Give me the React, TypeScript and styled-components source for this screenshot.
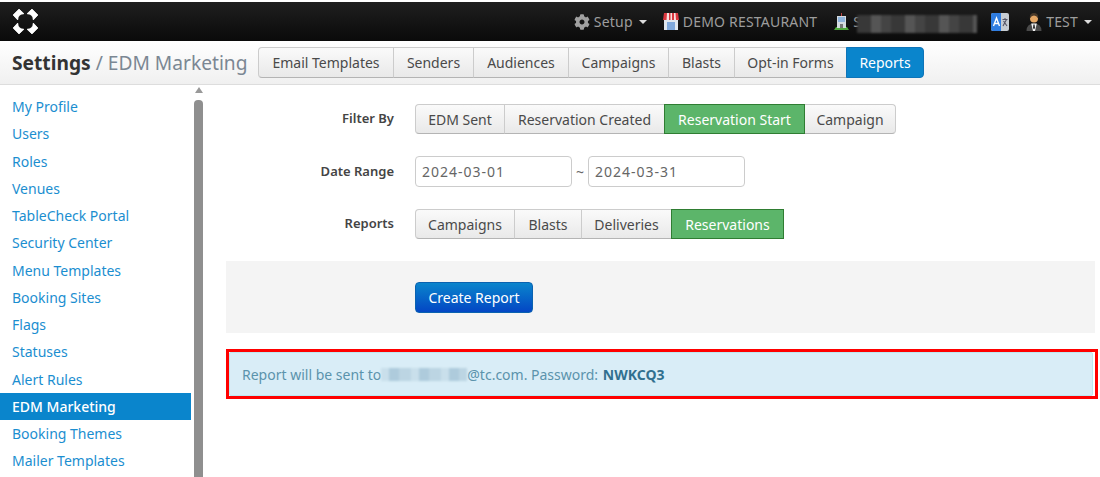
import React from "react";
import styled, { createGlobalStyle } from "styled-components";
import { FaCog } from "react-icons/fa";

const GlobalStyle = createGlobalStyle`
  html, body {
    margin: 0;
    padding: 0;
    background: #fff;
    overflow: hidden;
  }
  * {
    box-sizing: border-box;
  }
  body {
    font-family: "Noto Sans", "Open Sans", sans-serif;
    font-size: 14px;
    color: #333;
  }
`;

const Page = styled.div`
  width: 1100px;
  height: 477px;
  padding-top: 2px;
  display: flex;
  flex-direction: column;
  overflow: hidden;
`;

const TopBar = styled.div`
  height: 39px;
  flex: none;
  background: linear-gradient(#1f1f1f, #0a0a0a);
  display: flex;
  align-items: center;
  justify-content: space-between;
  padding: 0 8px 0 12px;
`;

const TopNav = styled.div`
  display: flex;
  align-items: center;
`;

const TopItem = styled.span<{ $left: number }>`
  display: flex;
  align-items: center;
  gap: 4px;
  margin-left: ${(p) => p.$left}px;
  color: #9d9d9d;
  font-size: 14px;
  letter-spacing: 0.2px;
  white-space: nowrap;
`;

const Caret = styled.span`
  width: 0;
  height: 0;
  margin-left: 2px;
  border-left: 4px solid transparent;
  border-right: 4px solid transparent;
  border-top: 4px solid #ddd;
`;

const Blurred = styled.span`
  display: flex;
  width: 120px;
  height: 18px;
  margin: 5px 0 0 -8px;
  background: repeating-linear-gradient(90deg, #383838 0 14px, #555 14px 24px, #444 24px 34px);
  filter: blur(1px);
`;

const SubHeader = styled.div`
  height: 44px;
  flex: none;
  background: linear-gradient(#fff, #f0f0f0);
  border-bottom: 1px solid #ddd;
  display: flex;
  align-items: center;
  padding: 0 0 0 12px;
`;

const Title = styled.div`
  font-size: 19.2px;
  color: #7b8793;
  white-space: nowrap;
  width: 246px;
  flex: none;
  strong {
    color: #333;
    font-weight: 700;
  }
`;

const BtnGroup = styled.div`
  display: flex;
`;

const SegBtn = styled.div<{ $width: number; $height?: number; $active?: "blue" | "green" }>`
  width: ${(p) => p.$width}px;
  height: ${(p) => p.$height ?? 31}px;
  display: flex;
  align-items: center;
  justify-content: center;
  font-size: 14px;
  white-space: nowrap;
  margin-left: -1px;
  position: relative;
  z-index: ${(p) => (p.$active ? 1 : 0)};
  color: ${(p) => (p.$active ? "#fff" : "#4a4a4a")};
  border: 1px solid ${(p) => (p.$active === "blue" ? "#0e74b8" : p.$active === "green" ? "#2f7d32" : "#ccc")};
  border-bottom-color: ${(p) => (p.$active === "blue" ? "#0e74b8" : p.$active === "green" ? "#2f7d32" : "#b4b4b4")};
  background: ${(p) =>
    p.$active === "blue"
      ? "#0a85cc"
      : p.$active === "green"
        ? "#5cb56a"
        : "linear-gradient(#fafafa, #e9e9e9)"};
  &:first-child {
    margin-left: 0;
    border-radius: 4px 0 0 4px;
  }
  &:last-child {
    border-radius: ${(p) => (p.$active === "green" ? "0" : "0 4px 4px 0")};
  }
`;

const Body = styled.div`
  flex: 1;
  display: flex;
  min-height: 0;
`;

const Sidebar = styled.nav`
  width: 191px;
  flex: none;
  padding-top: 8px;
`;

const SideLink = styled.div<{ $active?: boolean }>`
  height: 27.25px;
  display: flex;
  align-items: center;
  padding-left: 12px;
  font-size: 14px;
  white-space: nowrap;
  color: ${(p) => (p.$active ? "#fff" : "#1b8ed0")};
  background: ${(p) => (p.$active ? "#0a85cc" : "transparent")};
  font-weight: ${(p) => (p.$active ? 500 : 400)};
`;

const Scrollbar = styled.div`
  width: 9px;
  flex: none;
  margin: 2px 0 0 3px;
  display: flex;
  flex-direction: column;
  align-items: center;
`;

const ScrollArrow = styled.div`
  width: 0;
  height: 0;
  border-left: 4.5px solid transparent;
  border-right: 4.5px solid transparent;
  border-bottom: 6px solid #999;
`;

const ScrollThumb = styled.div`
  width: 9px;
  flex: 1;
  margin-top: 7px;
  border-radius: 4px 4px 0 0;
  background: #8f8f8f;
`;

const Main = styled.main`
  width: 872px;
  flex: none;
  margin-left: 23px;
  padding-top: 19px;
`;

const FormRow = styled.div<{ $gap: number }>`
  display: flex;
  align-items: center;
  margin-bottom: ${(p) => p.$gap}px;
`;

const FormLabel = styled.div`
  width: 189px;
  padding: 0 21px 2px 0;
  text-align: right;
  font-weight: 600;
  font-size: 13px;
  color: #444;
  flex: none;
`;

const DateInput = styled.div`
  width: 157px;
  height: 31px;
  border: 1px solid #ccc;
  border-radius: 4px;
  padding-left: 6px;
  display: flex;
  align-items: center;
  font-size: 14px;
  color: #666;
  letter-spacing: 1px;
`;

const Tilde = styled.span`
  width: 16px;
  text-align: center;
  color: #666;
`;

const ActionBar = styled.div`
  height: 72px;
  margin: 22px 3px 0 0;
  background: #f4f4f4;
  padding-left: 189px;
  display: flex;
  align-items: center;
`;

const PrimaryButton = styled.button`
  width: 118px;
  height: 31px;
  padding: 0;
  border: 1px solid #0a62b0;
  border-radius: 4px;
  background: linear-gradient(#0a85cc, #0346c4);
  color: #fff;
  font-family: inherit;
  font-size: 14px;
`;

const NoticeFrame = styled.div`
  margin-top: 16px;
  height: 50px;
  width: 872px;
  padding-right: 2px;
  border: 3px solid #f00;
`;

const Notice = styled.div`
  height: 100%;
  padding-left: 12px;
  display: flex;
  align-items: center;
  background: #d9edf7;
  border: 1px solid #bce8f1;
  border-radius: 2px;
  color: #5b93ac;
  font-size: 14px;
  white-space: pre;
  strong {
    color: #31708f;
    font-weight: 700;
    margin-left: 1px;
  }
`;

const MailBlur = styled.span`
  width: 86px;
  height: 13px;
  background: repeating-linear-gradient(90deg, #c9dfeb 0 8px, #aecbdc 8px 18px, #bcd5e3 18px 30px);
  filter: blur(1px);
`;

const sideLinks = [
  "My Profile", "Users", "Roles", "Venues", "TableCheck Portal", "Security Center",
  "Menu Templates", "Booking Sites", "Flags", "Statuses", "Alert Rules", "EDM Marketing",
  "Booking Themes", "Mailer Templates",
];

const tabs: [string, number][] = [
  ["Email Templates", 136], ["Senders", 81], ["Audiences", 96], ["Campaigns", 101],
  ["Blasts", 67], ["Opt-in Forms", 113], ["Reports", 78],
];

const filters: [string, number][] = [
  ["EDM Sent", 90], ["Reservation Created", 161], ["Reservation Start", 141], ["Campaign", 92],
];

const reports: [string, number][] = [
  ["Campaigns", 100], ["Blasts", 68], ["Deliveries", 91], ["Reservations", 113],
];

const Logo = () => (
  <svg width="27" height="27" viewBox="-13.5 -13.5 27 27">
    {[0, 90, 180, 270].map((angle) => (
      <path
        key={angle}
        d="M-6.5 -12.4 L-12.4 -6.5 L-7.8 -1.6 Q-7.6 -7.6 -1.6 -7.8 Z"
        fill="#fff"
        stroke="#fff"
        strokeWidth="0.8"
        strokeLinejoin="round"
        transform={`rotate(${angle})`}
      />
    ))}
  </svg>
);

const StoreIcon = () => (
  <svg width="16" height="17" viewBox="0 0 16 17">
    <rect x="1" y="6" width="14" height="11" fill="#dfe6ee" />
    <rect x="4" y="9" width="8" height="8" fill="#7fa8dc" />
    <path d="M1 0h14l1 7H0z" fill="#d9363e" />
    <path d="M4 0h2v7H3.5zM7.5 0h1.5v7H7.5zM11 0h1.5l.5 7h-2z" fill="#f6dede" />
  </svg>
);

const BuildingIcon = () => (
  <svg width="15" height="18" viewBox="0 0 15 18">
    <path d="M0 17 L2 14 H13 L15 17z" fill="#4fa83d" />
    <rect x="3" y="3" width="9" height="12" fill="#d4dbe0" />
    <rect x="4" y="4" width="7" height="5" fill="#8fb4dc" />
    <rect x="6" y="11" width="3" height="4" fill="#777" />
    <rect x="7" y="0" width="1" height="3" fill="#b44" />
  </svg>
);

const TranslateIcon = () => (
  <svg width="18" height="18" viewBox="0 0 18 18">
    <rect x="0" y="0" width="18" height="18" rx="2" fill="#c6ccd2" />
    <path d="M0 2a2 2 0 0 1 2-2h8v18H2a2 2 0 0 1-2-2z" fill="#2f7de1" />
    <path d="M2.5 13 L5.5 5 L8.5 13 M3.6 10.5h3.8" stroke="#fff" strokeWidth="1.4" fill="none" />
    <path d="M11.5 6.5h5M14 5v1.5M12 13l3.5-6.5M12.5 8l3.5 5" stroke="#556" strokeWidth="1.1" fill="none" />
  </svg>
);

const UserIcon = () => (
  <svg width="16" height="19" viewBox="0 0 16 19">
    <path d="M0.5 19 Q0.5 11.5 8 11.5 Q15.5 11.5 15.5 19z" fill="#4a4a4a" />
    <path d="M5.2 11.5h5.6L9 19H7z" fill="#f4f4f4" />
    <path d="M7.4 12.5h1.2l.4 3.5-1 1.2-1-1.2z" fill="#222" />
    <circle cx="8" cy="6.5" r="4" fill="#e5a765" />
    <path d="M3.8 6.5 Q3.4 1 8 1 Q12.6 1 12.2 6.5 Q10.5 3.6 8 3.6 Q5.5 3.6 3.8 6.5z" fill="#4a3a2a" />
  </svg>
);

const App: React.FC = () => (
  <Page>
    <GlobalStyle />
    <TopBar>
      <Logo />
      <TopNav>
        <TopItem $left={0}>
          <FaCog size={16} color="#a0a0a0" /> Setup <Caret />
        </TopItem>
        <TopItem $left={16}>
          <StoreIcon /> DEMO RESTAURANT
        </TopItem>
        <TopItem $left={17}>
          <BuildingIcon /> S<Blurred />
        </TopItem>
        <TopItem $left={14}>
          <TranslateIcon />
        </TopItem>
        <TopItem $left={17}>
          <UserIcon /> TEST <Caret />
        </TopItem>
      </TopNav>
    </TopBar>
    <SubHeader>
      <Title>
        <strong>Settings</strong> / EDM Marketing
      </Title>
      <BtnGroup>
        {tabs.map(([label, width]) => (
          <SegBtn key={label} $width={width} $active={label === "Reports" ? "blue" : undefined}>
            {label}
          </SegBtn>
        ))}
      </BtnGroup>
    </SubHeader>
    <Body>
      <Sidebar>
        {sideLinks.map((link) => (
          <SideLink key={link} $active={link === "EDM Marketing"}>
            {link}
          </SideLink>
        ))}
      </Sidebar>
      <Scrollbar>
        <ScrollArrow />
        <ScrollThumb />
      </Scrollbar>
      <Main>
        <FormRow $gap={22}>
          <FormLabel>Filter By</FormLabel>
          <BtnGroup>
            {filters.map(([label, width]) => (
              <SegBtn key={label} $width={width} $height={30} $active={label === "Reservation Start" ? "green" : undefined}>
                {label}
              </SegBtn>
            ))}
          </BtnGroup>
        </FormRow>
        <FormRow $gap={22}>
          <FormLabel>Date Range</FormLabel>
          <DateInput>2024-03-01</DateInput>
          <Tilde>~</Tilde>
          <DateInput>2024-03-31</DateInput>
        </FormRow>
        <FormRow $gap={0}>
          <FormLabel>Reports</FormLabel>
          <BtnGroup>
            {reports.map(([label, width]) => (
              <SegBtn key={label} $width={width} $height={30} $active={label === "Reservations" ? "green" : undefined}>
                {label}
              </SegBtn>
            ))}
          </BtnGroup>
        </FormRow>
        <ActionBar>
          <PrimaryButton>Create Report</PrimaryButton>
        </ActionBar>
        <NoticeFrame>
          <Notice>
            {"Report will be sent to"}
            <MailBlur />
            {"@tc.com. Password: "}
            <strong>NWKCQ3</strong>
          </Notice>
        </NoticeFrame>
      </Main>
    </Body>
  </Page>
);

export default App;
